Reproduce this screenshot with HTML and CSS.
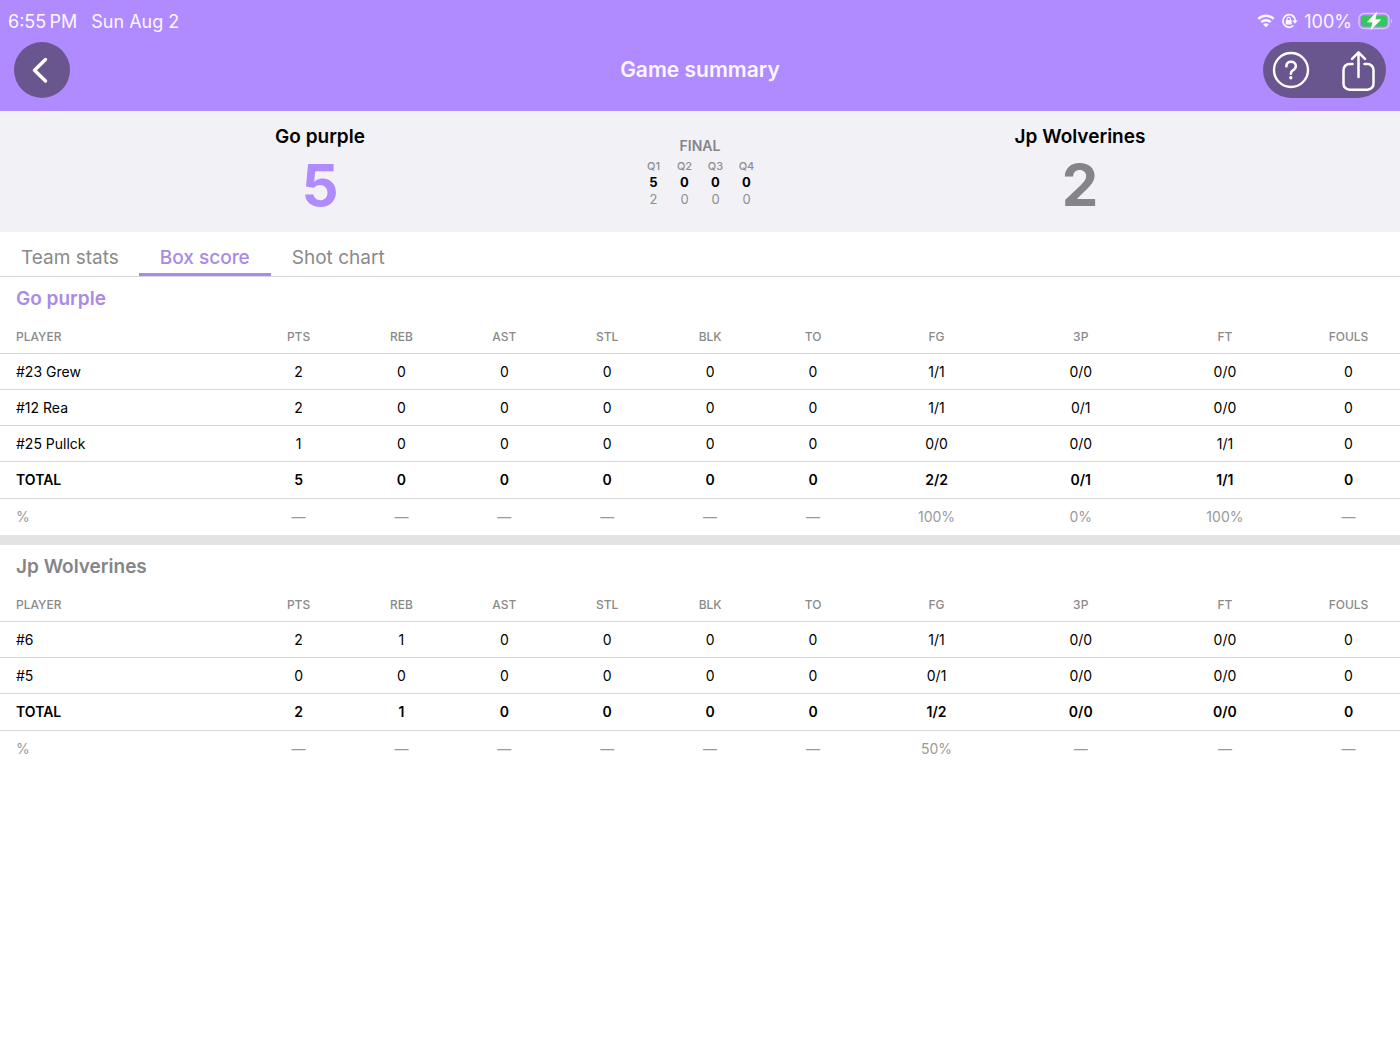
FILE: index.html
```html
<!DOCTYPE html>
<html lang="en">
<head>
<meta charset="utf-8">
<meta name="viewport" content="width=device-width, initial-scale=1">
<title>Game summary</title>
<link rel="stylesheet" href="styles.css">
</head>
<body>
<header class="topbar">
  <div class="status">
    <div class="status-left"><span>6:55&#8201;PM</span><span>Sun Aug 2</span></div>
    <div class="status-right">
      <svg width="18" height="14" viewBox="0 0 20 15" fill="none" stroke="#fdf6ff" stroke-width="2.9" aria-hidden="true"><path d="M1.4 5.2C6.2.4 13.8.4 18.6 5.2"/><path d="M4.8 8.800C7.7 6 12.3 6 15.2 8.800"/><path d="M10 14.500 6.900 11.300Q10 8.800 13.100 11.300Z" fill="#fdf6ff" stroke="none"/></svg>
      <svg width="17" height="16" viewBox="0 0 18 16" fill="none" stroke="#fdf6ff" stroke-width="1.7" aria-hidden="true"><path d="M13.2 3A6.7 6.7 0 1 0 13.2 13"/><path d="M11.6 1.9A6.7 6.7 0 0 1 14.9 8.6"/><path d="M12 7.6H17.6L14.8 11Z" fill="#fdf6ff" stroke="none"/><rect x="5" y="7" width="6.4" height="4.8" rx="1" fill="#fdf6ff" stroke="none"/><path d="M6.4 7.4V6a1.8 1.8 0 0 1 3.6 0v1.4" stroke-width="1.2"/></svg>
      <span>100%</span>
      <svg class="battery" width="36" height="18" viewBox="0 0 36 18" aria-hidden="true"><rect x="1" y="1.5" width="30" height="15" rx="5" fill="none" stroke="#d9c8ff" stroke-width="1.4"/><rect x="3" y="3.500" width="26" height="11" rx="3" fill="#34c759"/><path d="M33 6.500q2.500 2.500 0 5z" fill="#d9c8ff"/><path d="M18.500.5 9.500 10h5.500L13 17.500 22.500 7.800H17Z" fill="#fff" stroke="#fff" stroke-width=".8" stroke-linejoin="round"/></svg>
    </div>
  </div>
  <div class="nav">
    <button class="round-btn" type="button" aria-label="Back">
      <svg width="56" height="56" viewBox="0 0 56 56" fill="none" stroke="#fff" stroke-width="3.400" stroke-linecap="round" stroke-linejoin="round"><path d="M31.500 17.500 20.500 28.200 31.500 39"/></svg>
    </button>
    <h1 class="title">Game summary</h1>
    <div class="actions">
      <button class="action" type="button" aria-label="Help">
        <svg width="38" height="38" viewBox="0 0 38 38" fill="none" stroke="#fff" stroke-linecap="round" stroke-linejoin="round"><circle cx="19" cy="19" r="17" stroke-width="2.400"/><path d="M14.300 15.300c.2-3 2.200-4.500 4.800-4.500 2.700 0 4.700 1.700 4.700 4.200 0 2-1 3.100-2.700 4.200-1.700 1-2.200 1.800-2.200 3.600" stroke-width="2.500"/><circle cx="18.800" cy="26.700" r="1.700" fill="#fff" stroke="none"/></svg>
      </button>
      <button class="action" type="button" aria-label="Share">
        <svg width="38" height="42" viewBox="0 0 38 42" fill="none" stroke="#fff" stroke-width="2.500" stroke-linecap="round" stroke-linejoin="round"><path d="M13.500 15H10.500a6 6 0 0 0-6 6V34.700a6 6 0 0 0 6 6H28.500a6 6 0 0 0 6-6V21a6 6 0 0 0-6-6H25.500"/><path d="M19.500 28V3.500M13 9.800 19.500 3.300 26 9.800"/></svg>
      </button>
    </div>
  </div>
</header>

<main>
  <section class="scoreboard">
    <div class="side">
      <h2 class="side-name">Go purple</h2>
      <div class="side-score home">5</div>
    </div>
    <div class="final">
      <div class="final-label">FINAL</div>
      <table class="quarters">
        <thead><tr><th scope="col">Q1</th><th scope="col">Q2</th><th scope="col">Q3</th><th scope="col">Q4</th></tr></thead>
        <tbody>
          <tr class="won"><td>5</td><td>0</td><td>0</td><td>0</td></tr>
          <tr><td>2</td><td>0</td><td>0</td><td>0</td></tr>
        </tbody>
      </table>
    </div>
    <div class="side">
      <h2 class="side-name">Jp Wolverines</h2>
      <div class="side-score away">2</div>
    </div>
  </section>

  <div class="tabs" role="tablist">
    <button class="tab" type="button" role="tab" aria-selected="false">Team stats</button>
    <button class="tab active" type="button" role="tab" aria-selected="true">Box score</button>
    <button class="tab" type="button" role="tab" aria-selected="false">Shot chart</button>
  </div>

  <section class="team">
    <h3 class="team-name home">Go purple</h3>
    <table class="box">
      <colgroup><col class="c-player"><col span="6" class="c-stat"><col span="3" class="c-shots"><col class="c-stat"></colgroup>
      <thead><tr><th scope="col">PLAYER</th><th scope="col">PTS</th><th scope="col">REB</th><th scope="col">AST</th><th scope="col">STL</th><th scope="col">BLK</th><th scope="col">TO</th><th scope="col">FG</th><th scope="col">3P</th><th scope="col">FT</th><th scope="col">FOULS</th></tr></thead>
      <tbody>
        <tr><td>#23 Grew</td><td>2</td><td>0</td><td>0</td><td>0</td><td>0</td><td>0</td><td>1/1</td><td>0/0</td><td>0/0</td><td>0</td></tr>
        <tr><td>#12 Rea</td><td>2</td><td>0</td><td>0</td><td>0</td><td>0</td><td>0</td><td>1/1</td><td>0/1</td><td>0/0</td><td>0</td></tr>
        <tr><td>#25 Pullck</td><td>1</td><td>0</td><td>0</td><td>0</td><td>0</td><td>0</td><td>0/0</td><td>0/0</td><td>1/1</td><td>0</td></tr>
        <tr class="total"><td>TOTAL</td><td>5</td><td>0</td><td>0</td><td>0</td><td>0</td><td>0</td><td>2/2</td><td>0/1</td><td>1/1</td><td>0</td></tr>
        <tr class="pct"><td>%</td><td>—</td><td>—</td><td>—</td><td>—</td><td>—</td><td>—</td><td>100%</td><td>0%</td><td>100%</td><td>—</td></tr>
      </tbody>
    </table>
  </section>

  <section class="team divided">
    <h3 class="team-name away">Jp Wolverines</h3>
    <table class="box">
      <colgroup><col class="c-player"><col span="6" class="c-stat"><col span="3" class="c-shots"><col class="c-stat"></colgroup>
      <thead><tr><th scope="col">PLAYER</th><th scope="col">PTS</th><th scope="col">REB</th><th scope="col">AST</th><th scope="col">STL</th><th scope="col">BLK</th><th scope="col">TO</th><th scope="col">FG</th><th scope="col">3P</th><th scope="col">FT</th><th scope="col">FOULS</th></tr></thead>
      <tbody>
        <tr><td>#6</td><td>2</td><td>1</td><td>0</td><td>0</td><td>0</td><td>0</td><td>1/1</td><td>0/0</td><td>0/0</td><td>0</td></tr>
        <tr><td>#5</td><td>0</td><td>0</td><td>0</td><td>0</td><td>0</td><td>0</td><td>0/1</td><td>0/0</td><td>0/0</td><td>0</td></tr>
        <tr class="total"><td>TOTAL</td><td>2</td><td>1</td><td>0</td><td>0</td><td>0</td><td>0</td><td>1/2</td><td>0/0</td><td>0/0</td><td>0</td></tr>
        <tr class="pct"><td>%</td><td>—</td><td>—</td><td>—</td><td>—</td><td>—</td><td>—</td><td>50%</td><td>—</td><td>—</td><td>—</td></tr>
      </tbody>
    </table>
  </section>
</main>
</body>
</html>
```
FILE: styles.css
```css
* { box-sizing: border-box; }
body {
  margin: 0;
  background: #fff;
  color: #000;
  font-family: Inter, "Liberation Sans", sans-serif;
  font-size: 14px;
}
h1, h2, h3 { margin: 0; font-weight: 600; }
button { border: 0; padding: 0; background: none; font: inherit; color: inherit; cursor: pointer; }
svg { display: block; }
table { border-collapse: collapse; }

.topbar { background: #b08aff; color: #fdf6ff; padding-bottom: 13px; }
.status {
  display: flex;
  justify-content: space-between;
  align-items: center;
  height: 42px;
  padding: 0 6px 0 8px;
  font-size: 18px;
}
.status-left { display: flex; gap: 14px; }
.status-right { display: flex; align-items: center; gap: 6px; }

.nav {
  display: grid;
  grid-template-columns: 1fr auto 1fr;
  align-items: center;
  padding: 0 14px;
}
.round-btn { width: 56px; height: 56px; border-radius: 50%; background: #6a568f; }
.title { font-size: 21px; line-height: 28px; }
.actions {
  justify-self: end;
  display: flex;
  align-items: center;
  justify-content: space-between;
  width: 123px;
  height: 56px;
  padding: 0 9px;
  border-radius: 28px;
  background: #6a568f;
}

.scoreboard {
  display: grid;
  grid-template-columns: 1fr 120px 1fr;
  height: 121px;
  background: #f2f1f6;
}
.side { padding-top: 12px; text-align: center; }
.side-name { font-size: 19px; line-height: 28px; }
.side-score { font-size: 58px; line-height: 68px; font-weight: 700; }
.home { color: #b08aff; }
.away { color: #858589; }
.final { padding-top: 26px; text-align: center; }
.final-label { font-size: 14px; line-height: 18px; font-weight: 600; color: #858589; }
.quarters { table-layout: fixed; width: 124px; margin: 3px -2px 0; }
.quarters th { padding: 0; font-size: 11px; line-height: 16px; font-weight: 500; color: #8e8e92; }
.quarters td { padding: 0; font-size: 13px; line-height: 17px; color: #8e8e92; }
.quarters .won td { font-weight: 700; color: #000; }

.tabs { display: flex; height: 45px; border-bottom: 1px solid #d8d8da; }
.tab {
  padding: 10px 21px 0;
  border-bottom: 3px solid transparent;
  font-size: 19px;
  color: #8a8a8a;
}
.tab:first-child { padding-right: 20px; }
.tab.active { color: #a98ae6; border-color: #a98ae6; font-weight: 500; }

.team.divided { border-top: 10px solid #e3e3e5; }
.team-name { padding: 8px 16px; font-size: 19px; line-height: 28px; }
.team-name.home { color: #a98ae6; }
.box { table-layout: fixed; width: 100%; }
.c-player { width: 17.65%; }
.c-stat { width: 7.35%; }
.c-shots { width: 10.3%; }
.box th, .box td { padding: 0; text-align: center; border-bottom: 1px solid #d8d8da; }
.box th:first-child, .box td:first-child { padding-left: 16px; text-align: left; }
.box th { height: 32px; font-size: 12px; font-weight: 500; color: #8a8a8a; }
.box td { height: 36px; }
.box .total td { height: 37px; font-weight: 600; }
.box .pct td { height: 37px; border-bottom: 0; color: #9a9a9a; }
```
